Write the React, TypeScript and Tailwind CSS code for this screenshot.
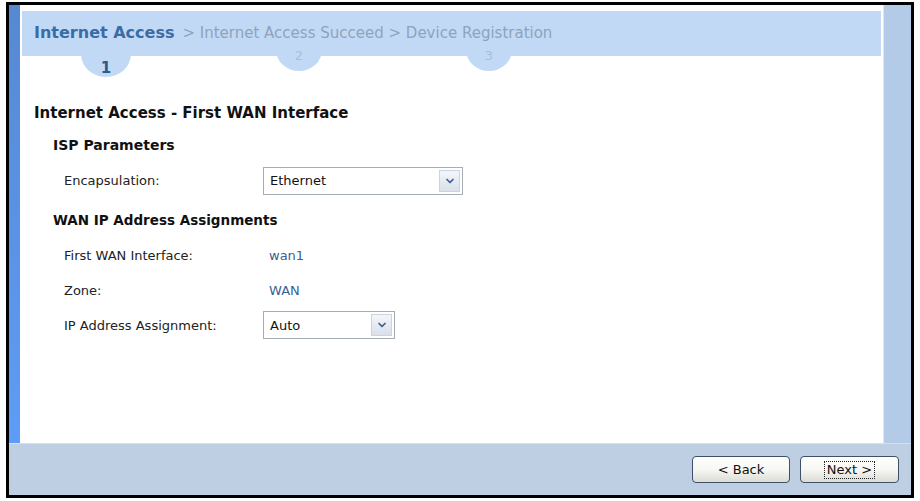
import { ChevronDown } from 'lucide-react';

const font = { fontFamily: 'Tahoma, "DejaVu Sans", sans-serif' };

function Select({ value, width }: { value: string; width: string }) {
  return (
    <div className={`flex h-[28px] items-stretch border border-[#a5acb5] bg-white ${width}`}>
      <span className="flex flex-1 items-center pl-[6px] text-[13px] text-[#111]">{value}</span>
      <span className="m-[2px] flex w-[21px] items-center justify-center border border-[#c9d4e3] bg-gradient-to-b from-[#f4f6f9] to-[#d9e0ea]">
        <ChevronDown className="h-[12px] w-[12px] text-[#3d5f95]" strokeWidth={3.5} />
      </span>
    </div>
  );
}

function Bubble({ n, active }: { n: string; active?: boolean }) {
  return (
    <div className={`absolute rounded-[50%] bg-[#c2d9f5] ${active ? 'top-[20px] h-[46px] w-[50px]' : 'top-[18px] h-[42px] w-[46px]'}`}>
      <span
        className={`absolute left-0 right-0 text-center ${active ? 'bottom-[-2px] text-[15px] font-bold text-[#2c5a8e]' : 'bottom-[6px] text-[13px] text-[#a6bfdc]'}`}
      >
        {n}
      </span>
    </div>
  );
}

function Row({ label, children }: { label: string; children: React.ReactNode }) {
  return (
    <div className="flex h-[35px] items-center">
      <span className="w-[229px] pl-[30px] text-[13px] text-[#222]">{label}</span>
      {children}
    </div>
  );
}

export default function App() {
  return (
    <div className="h-[501px] w-[920px] bg-white pl-[6px] pt-[2px]" style={font}>
      <div className="flex h-[496px] w-[908px] flex-col border-[3px] border-black">
        <div className="flex flex-1">
          <div className="w-[11px] bg-gradient-to-b from-[#5689d3] to-[#5e9cf6]" />
          <div className="relative flex-1 bg-white pt-[6px]">
            <div className="relative mx-[2px] h-[45px] bg-[#c2d9f5]">
              <div className="absolute left-[59px] top-0"><Bubble n="1" active /></div>
              <div className="absolute left-[254px] top-0"><Bubble n="2" /></div>
              <div className="absolute left-[444px] top-0"><Bubble n="3" /></div>
              <div className="relative flex items-baseline pl-[12px] pt-[10px]">
                <span className="text-[16px] font-bold text-[#3a6ca5]">Internet Access</span>
                <span className="ml-[8px] text-[15px] text-[#8ea3bd]">&gt; Internet Access Succeed &gt; Device Registration</span>
              </div>
            </div>
            <div className="pl-[14px] pt-[46px]">
              <div className="text-[15px] font-bold text-[#111]">Internet Access - First WAN Interface</div>
              <div className="pl-[19px] pt-[10px] text-[14px] font-bold text-[#111]">ISP Parameters</div>
              <div className="pt-[8px]">
                <Row label="Encapsulation:">
                  <Select value="Ethernet" width="w-[200px]" />
                </Row>
              </div>
              <div className="pl-[19px] pt-[11px] text-[13.5px] font-bold text-[#111]">WAN IP Address Assignments</div>
              <div className="pt-[8px]">
                <Row label="First WAN Interface:">
                  <span className="pl-[6px] text-[13px] text-[#3a5f92]">wan1</span>
                </Row>
                <Row label="Zone:">
                  <span className="pl-[6px] text-[13px] text-[#3a5f92]">WAN</span>
                </Row>
                <Row label="IP Address Assignment:">
                  <Select value="Auto" width="w-[132px]" />
                </Row>
              </div>
            </div>
          </div>
          <div className="w-[28px] border-l border-[#dce8f6] bg-[#b4cbe8]" />
        </div>
        <div className="flex h-[52px] items-center justify-end gap-[10px] border-t border-[#d5e0ee] bg-[#bfcfe3] pr-[12px]">
          <button className="h-[27px] w-[98px] rounded-[4px] border border-[#3e4f69] bg-gradient-to-b from-[#ffffff] via-[#f7f7f4] to-[#dcdcd4] text-[13px] text-[#111]">
            &lt; Back
          </button>
          <button className="flex h-[27px] w-[99px] items-center justify-center rounded-[4px] border border-[#3e4f69] bg-gradient-to-b from-[#ffffff] via-[#f7f7f4] to-[#dcdcd4] text-[13px] text-[#111]">
            <span className="border border-dotted border-[#222] px-[2px] leading-[16px]">Next &gt;</span>
          </button>
        </div>
      </div>
    </div>
  );
}
